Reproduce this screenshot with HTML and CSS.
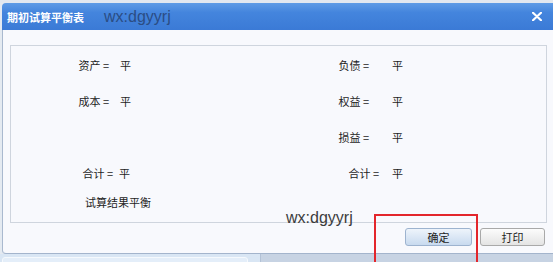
FILE: index.html
```html
<!DOCTYPE html>
<html lang="zh-CN">
<head>
<meta charset="utf-8">
<title>期初试算平衡表</title>
<link rel="stylesheet" href="styles.css">
</head>
<body>
<div class="screen">
  <div class="topstrip"></div>
  <div class="window">
    <div class="titlebar">
      <span class="title">期初试算平衡表</span>
      <svg class="close" width="10" height="9" viewBox="0 0 10 9" aria-hidden="true">
        <path d="M1 0.8 L9 8.2 M9 0.8 L1 8.2" stroke="#fff" stroke-width="2.2" stroke-linecap="round"/>
      </svg>
    </div>
    <div class="winbody">
      <div class="panel">
        <div class="col col-left">
          <div class="row"><span class="lbl">资产 =</span><span class="val">平</span></div>
          <div class="row"><span class="lbl">成本 =</span><span class="val">平</span></div>
          <div class="row"></div>
          <div class="row total"><span class="lbl">合计 =</span><span class="val">平</span></div>
          <div class="result">试算结果平衡</div>
        </div>
        <div class="col col-right">
          <div class="row"><span class="lbl">负债 =</span><span class="val">平</span></div>
          <div class="row"><span class="lbl">权益 =</span><span class="val">平</span></div>
          <div class="row"><span class="lbl">损益 =</span><span class="val">平</span></div>
          <div class="row total"><span class="lbl">合计 =</span><span class="val">平</span></div>
        </div>
      </div>
      <div class="actions">
        <button class="btn btn-primary">确定</button>
        <button class="btn">打印</button>
      </div>
    </div>
  </div>
  <div class="taskbar">
    <div class="tb-left"><div class="tb-box"></div></div>
    <div class="tb-right"></div>
  </div>
  <div class="wm wm-top">wx:dgyyrj</div>
  <div class="wm wm-bottom">wx:dgyyrj</div>
  <div class="highlight"></div>
</div>
</body>
</html>
```

FILE: styles.css
```css
* { box-sizing: border-box; }

html, body {
  margin: 0;
  padding: 0;
  background: #e4eaf1;
}

body {
  font-family: "Noto Sans CJK SC", "Liberation Sans", sans-serif;
  font-size: 11px;
  color: #1e1e1e;
}

.screen {
  position: relative;
  width: 553px;
  height: 262px;
  overflow: hidden;
  background: #e4eaf1;
}

.topstrip {
  height: 3px;
  background: #e2e8f0;
}

.window {
  margin-left: 2px;
  height: 251px;
  display: flex;
  flex-direction: column;
}

.titlebar {
  height: 27px;
  flex: none;
  display: flex;
  align-items: center;
  justify-content: space-between;
  padding: 0 11px 0 5px;
  background: linear-gradient(#5e9be6 0%, #4485dd 35%, #3b7ad6 100%);
  border-top-left-radius: 4px;
}

.title {
  color: #fff;
  font-size: 11px;
  font-weight: bold;
  letter-spacing: 0;
}

.close { display: block; }

.winbody {
  flex: 1;
  background: #f8f9fd;
  border-left: 1px solid #a9b9cf;
  border-bottom: 1px solid #a3b4cc;
  border-bottom-left-radius: 4px;
  display: flex;
  flex-direction: column;
}

.panel {
  margin: 15px 6px 0 7px;
  height: 178px;
  border: 1px solid #cfd5de;
  padding-top: 1px;
  display: grid;
  grid-template-columns: 269px 1fr;
}

.col { display: flex; flex-direction: column; }

.row {
  height: 36px;
  line-height: 36px;
  display: flex;
  white-space: nowrap;
}

.lbl { text-align: right; }
.col-left .lbl { width: 98px; }
.col-left .val { margin-left: 11px; }
.col-left .total .lbl { width: 102px; }
.col-left .total .val { margin-left: 6px; }

.col-right .lbl { width: 89px; }
.col-right .val { margin-left: 23px; }
.col-right .total .lbl { width: 99px; }
.col-right .total .val { margin-left: 13px; }

.result {
  line-height: 22px;
  padding-left: 74px;
}

.actions {
  margin-top: 5px;
  padding-right: 8px;
  display: flex;
  justify-content: flex-end;
  gap: 8px;
}

.btn {
  height: 18px;
  width: 65px;
  padding: 0;
  font-family: "Noto Sans CJK SC", "Liberation Sans", sans-serif;
  font-size: 11px;
  line-height: 16px;
  color: #1e1e1e;
  border: 1px solid #a9a9a9;
  border-radius: 3px;
  background: linear-gradient(#fcfcfc, #e4e4e4);
}

.btn-primary {
  width: 67px;
  border-color: #9db3cf;
  background: linear-gradient(#eef4fb, #c8daef);
}

.taskbar {
  height: 8px;
  display: flex;
}

.tb-left {
  width: 261px;
  background: #d9e6f4;
  padding: 3px 0 0 2px;
  border-right: 1px solid #b3c2d6;
}

.tb-box {
  width: 246px;
  height: 10px;
  border: 1px solid #f5f9fd;
  border-radius: 3px;
  background: #e4eef9;
}

.tb-right {
  flex: 1;
  background: #c7d3e3;
}

.wm {
  position: absolute;
  font-family: "Liberation Sans", sans-serif;
  font-size: 16px;
  line-height: 18px;
  white-space: nowrap;
}

.wm-top {
  left: 104px;
  top: 8px;
  color: #2b4d84;
}

.wm-bottom {
  left: 286px;
  top: 209px;
  color: #3c3c3c;
}

.highlight {
  position: absolute;
  left: 374px;
  top: 214px;
  width: 104px;
  height: 60px;
  border: 2px solid #e3262c;
}
```
